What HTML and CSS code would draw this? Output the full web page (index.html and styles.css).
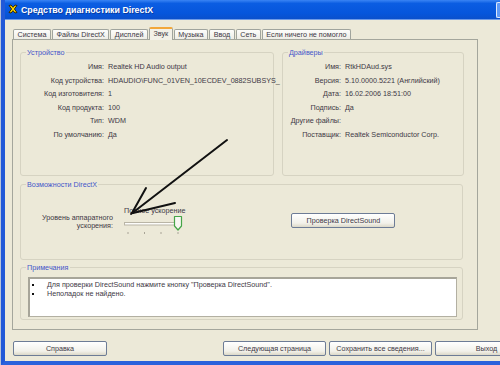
FILE: index.html
```html
<!DOCTYPE html>
<html lang="ru">
<head>
<meta charset="utf-8">
<title>Средство диагностики DirectX</title>
<link rel="stylesheet" href="styles.css">
</head>
<body>
<div class="window">
  <div class="titlebar">
    <svg class="app-icon" viewBox="0 0 10 10" width="10" height="10">
      <path d="M1,1.5 L3,1 L5,3.3 L7,1 L9,1.5 L6.4,5 L9,8.5 L7,9 L5,6.7 L3,9 L1,8.5 L3.6,5 Z" fill="#ffd600" stroke="#2a1d00" stroke-width="0.9" stroke-linejoin="round"/>
    </svg>
    <span class="title">Средство диагностики DirectX</span>
    <span class="tb-btn"></span>
  </div>
  <div class="client">
    <div class="tabs">
      <div class="tab">Система</div>
      <div class="tab">Файлы DirectX</div>
      <div class="tab">Дисплей</div>
      <div class="tab active">Звук</div>
      <div class="tab">Музыка</div>
      <div class="tab">Ввод</div>
      <div class="tab">Сеть</div>
      <div class="tab">Если ничего не помогло</div>
    </div>
    <div class="panel">
      <div class="top-row">
        <div class="group device">
          <span class="legend">Устройство</span>
          <div class="props dev-props">
            <span class="k">Имя:</span><span class="v">Realtek HD Audio output</span>
            <span class="k">Код устройства:</span><span class="v">HDAUDIO\FUNC_01VEN_10ECDEV_0882SUBSYS_</span>
            <span class="k">Код изготовителя:</span><span class="v">1</span>
            <span class="k">Код продукта:</span><span class="v">100</span>
            <span class="k">Тип:</span><span class="v">WDM</span>
            <span class="k">По умолчанию:</span><span class="v">Да</span>
          </div>
        </div>
        <div class="group drivers">
          <span class="legend">Драйверы</span>
          <div class="props drv-props">
            <span class="k">Имя:</span><span class="v">RtkHDAud.sys</span>
            <span class="k">Версия:</span><span class="v">5.10.0000.5221 (Английский)</span>
            <span class="k">Дата:</span><span class="v">16.02.2006 18:51:00</span>
            <span class="k">Подпись:</span><span class="v">Да</span>
            <span class="k">Другие файлы:</span><span class="v"></span>
            <span class="k">Поставщик:</span><span class="v">Realtek Semiconductor Corp.</span>
          </div>
        </div>
      </div>
      <div class="group dx">
        <span class="legend">Возможности DirectX</span>
        <div class="dx-row">
          <div class="accel-label">Уровень аппаратного<br>ускорения:</div>
          <div class="slider">
            <div class="slider-caption">Полное ускорение</div>
            <svg class="slider-ctl" viewBox="0 0 62 22" width="62" height="22">
              <rect x="1.5" y="7.5" width="52" height="2.5" fill="#fdfdfb" stroke="#b9b5a6" stroke-width="1"/>
              <path d="M51.5,1.5 H58.5 V11 L55,15 L51.5,11 Z" fill="#f7f7f2" stroke="#45a548" stroke-width="1.2" stroke-linejoin="round"/>
              <rect x="4.5" y="17" width="1" height="2" fill="#a8a496"/>
              <rect x="21" y="17" width="1" height="2" fill="#a8a496"/>
              <rect x="37.5" y="17" width="1" height="2" fill="#a8a496"/>
              <rect x="54.5" y="17" width="1" height="2" fill="#a8a496"/>
            </svg>
          </div>
          <button class="btn test-btn">Проверка DirectSound</button>
        </div>
      </div>
      <div class="group notes">
        <span class="legend">Примечания</span>
        <div class="notes-box">
          <ul>
            <li>Для проверки DirectSound нажмите кнопку "Проверка DirectSound".</li>
            <li>Неполадок не найдено.</li>
          </ul>
        </div>
      </div>
    </div>
    <div class="buttons">
      <button class="btn help">Справка</button>
      <div class="btn-group">
        <button class="btn wide">Следующая страница</button>
        <button class="btn wide">Сохранить все сведения...</button>
        <button class="btn wide">Выход</button>
      </div>
    </div>
  </div>
</div>
<svg class="arrow" viewBox="0 0 500 365" width="500" height="365">
  <g stroke="#111" stroke-width="2" stroke-linecap="round" fill="none">
    <path d="M227,140 L131,214"/>
    <path d="M146,188 L132,213"/>
    <path d="M175,203 L133,213"/>
  </g>
</svg>
</body>
</html>
```

FILE: styles.css
```css
* { box-sizing: border-box; }

body {
  margin: 0;
  width: 500px;
  height: 365px;
  overflow: hidden;
  position: relative;
  background: #b7c3da;
  font-family: "Liberation Sans", Arial, sans-serif;
  font-size: 7.2px;
  color: #3d3845;
}

.window {
  margin-left: 1px;
  height: 365px;
  border-left: 4px solid #2159d8;
  border-bottom: 4px solid #2a62dc;
  background: #ece9d8;
  overflow: hidden;
}

.titlebar {
  height: 20px;
  display: flex;
  align-items: center;
  padding-left: 3px;
  background: linear-gradient(#3a84f4 0%, #0b5de2 18%, #0656dc 70%, #0a50cc 100%);
  border-bottom: 1px solid #6f9be6;
  color: #fff;
  font-weight: bold;
  font-size: 8.8px;
}

.app-icon { flex: none; margin-right: 3px; margin-top: -1px; }

.title { white-space: nowrap; text-shadow: 1px 1px 0 #0a3b9e; }

.tb-btn {
  margin-left: auto;
  width: 4px;
  height: 16px;
  background: #5f9af7;
  border: 1px solid #dfe9fb;
  border-right: none;
  border-radius: 2px 0 0 2px;
}

.client { padding: 7px 0 0 7px; }

.tabs {
  display: flex;
  align-items: flex-end;
  height: 12px;
  padding-left: 1px;
  position: relative;
  z-index: 1;
}

.tab {
  height: 10px;
  padding: 0 3.5px;
  line-height: 9px;
  white-space: nowrap;
  background: linear-gradient(#fdfdfb, #eeede6);
  border: 1px solid #a0a49d;
  border-bottom: none;
  border-radius: 2px 2px 0 0;
  margin-right: 1px;
}

.tab.active {
  height: 13px;
  margin-bottom: -1px;
  background: #f3f1e7;
  border-top: 2px solid #f2a73a;
  line-height: 10px;
}

.panel {
  width: 466px;
  height: 291px;
  border: 1px solid #a4a69c;
  background: #ece9d8;
  padding: 12px 0 0 7px;
}

.top-row { display: flex; gap: 8px; }

.group {
  position: relative;
  border: 1px solid #d6d3c2;
  border-radius: 3px;
}

.legend {
  position: absolute;
  top: -5px;
  left: 5px;
  padding: 0 1px;
  background: #ece9d8;
  color: #4556c9;
  line-height: 9px;
  white-space: nowrap;
}

.device { width: 254px; height: 124px; }
.drivers { width: 182px; height: 124px; }

.props {
  display: grid;
  column-gap: 4px;
  row-gap: 0;
  padding-top: 7px;
  line-height: 13.5px;
  white-space: nowrap;
}

.dev-props { grid-template-columns: 83px auto; }
.drv-props { grid-template-columns: 58px auto; }

.props .k { text-align: right; }

.dx {
  width: 443px;
  height: 76px;
  margin-top: 8px;
  display: flex;
  align-items: center;
}

.dx-row {
  display: flex;
  align-items: center;
  padding-bottom: 3px;
}

.accel-label {
  width: 92px;
  text-align: right;
  line-height: 8.5px;
  padding-top: 3px;
}

.slider { margin-left: 10px; margin-top: 1px; }

.slider-caption { line-height: 9px; padding-left: 1px; white-space: nowrap; }

.slider-ctl { display: block; }

.btn {
  font-family: inherit;
  font-size: 7.2px;
  color: #3d3845;
  height: 15px;
  padding: 0;
  border: 1px solid #6d7c96;
  border-radius: 2px;
  background: linear-gradient(#ffffff, #f2f1ea 70%, #dcd8c8);
  white-space: nowrap;
}

.test-btn { width: 104px; margin-left: 106px; }

.notes {
  width: 443px;
  height: 53px;
  margin-top: 7px;
  padding: 9px 5px 3px 7px;
}

.notes-box {
  height: 40px;
  background: #fff;
  border: 1px solid #b3b0a2;
  border-top: 2px solid #a7a599;
  border-left: 2px solid #a7a599;
  padding-top: 2px;
}

.notes-box ul {
  margin: 0;
  padding: 0;
  list-style: none;
}

.notes-box li {
  position: relative;
  padding-left: 17px;
  line-height: 8.5px;
  white-space: nowrap;
}

.notes-box li::before {
  content: "";
  position: absolute;
  left: 2px;
  top: 3px;
  width: 2px;
  height: 2px;
  background: #111;
}

.buttons {
  display: flex;
  margin-top: 11px;
  padding-left: 1px;
}

.help { width: 94px; flex: none; }

.btn-group {
  display: flex;
  gap: 3px;
  margin-left: 116px;
}

.wide { width: 103px; flex: none; }

.arrow {
  position: absolute;
  top: 0;
  left: 0;
  pointer-events: none;
}
```
